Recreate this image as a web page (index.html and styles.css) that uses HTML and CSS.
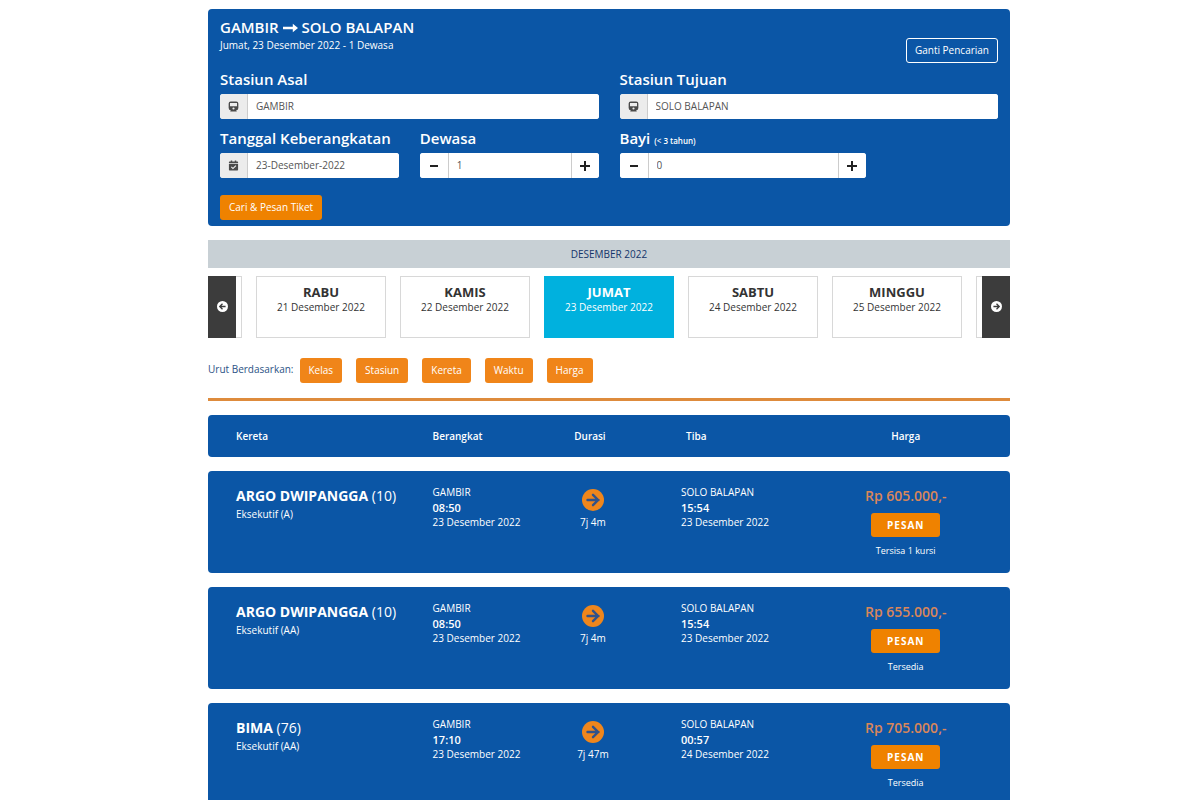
FILE: index.html
```html
<!DOCTYPE html>
<html lang="id">
<head>
<meta charset="utf-8">
<meta name="viewport" content="width=device-width, initial-scale=1">
<title>Jadwal Kereta</title>
<link rel="stylesheet" href="styles.css">
</head>
<body>
<svg class="sprite" aria-hidden="true">
  <symbol id="go" viewBox="0 0 22 22"><circle cx="11" cy="11" r="11" fill="#ef861c"/><path d="M5.500 11h11M11 5.800l5.200 5.200-5.200 5.200" fill="none" stroke="#31528a" stroke-width="2.400" stroke-linecap="round" stroke-linejoin="round"/></symbol>
  <symbol id="train" viewBox="0 0 12 12"><path fill-rule="evenodd" d="M3 .5h6a2.300 2.300 0 0 1 2.300 2.300v4.700a3 3 0 0 1-2.500 2.900l.9 1.100H2.300l.9-1.100A3 3 0 0 1 .7 7.500V2.800A2.300 2.300 0 0 1 3 .5zM2.200 2.300v3.500h7.600V2.300zM6 7a1.200 1.200 0 1 0 0 2.400A1.200 1.200 0 0 0 6 7z"/></symbol>
</svg>
<main class="page">
  <form class="search">
    <header class="search-head">
      <div>
        <h1 class="route">GAMBIR <svg class="route-arrow" viewBox="0 0 15 10" aria-hidden="true"><path d="M0 3.800h9.800V.8L15 5 9.800 9.200v-3H0z"/></svg> SOLO BALAPAN</h1>
        <p class="trip">Jumat, 23 Desember 2022 - 1 Dewasa</p>
      </div>
      <button type="button" class="btn btn-outline">Ganti Pencarian</button>
    </header>
    <div class="halves">
      <div class="field">
        <label for="asal">Stasiun Asal</label>
        <div class="group"><span class="addon"><svg viewBox="0 0 12 12" aria-hidden="true"><use href="#train"/></svg></span><input id="asal" type="text" value="GAMBIR"></div>
      </div>
      <div class="field">
        <label for="tujuan">Stasiun Tujuan</label>
        <div class="group"><span class="addon"><svg viewBox="0 0 12 12" aria-hidden="true"><use href="#train"/></svg></span><input id="tujuan" type="text" value="SOLO BALAPAN"></div>
      </div>
      <div class="halves">
        <div class="field">
          <label for="tanggal">Tanggal Keberangkatan</label>
          <div class="group"><span class="addon"><svg viewBox="0 0 12 12" aria-hidden="true"><path fill-rule="evenodd" d="M1 3.500V2.300Q1 1.500 1.800 1.500H3V.5h1.600v1h2.800v-1H9v1h1.200q.8 0 .8.800v1.200zM1 4.300h10v6.400q0 .8-.8.800H1.800q-.8 0-.8-.8zM3.200 7.900l2.200 2.300 3.700-3.700-.9-.9-2.800 2.800L4.100 7z"/></svg></span><input id="tanggal" type="text" value="23-Desember-2022"></div>
        </div>
        <div class="field">
          <label for="dewasa">Dewasa</label>
          <div class="group">
            <button type="button" class="step" aria-label="Kurangi dewasa"><svg viewBox="0 0 10 10"><path d="M1 4h8v2H1z"/></svg></button>
            <input id="dewasa" type="text" value="1">
            <button type="button" class="step" aria-label="Tambah dewasa"><svg viewBox="0 0 10 10"><path d="M4 0h2v4h4v2H6v4H4V6H0V4h4z"/></svg></button>
          </div>
        </div>
      </div>
      <div class="field infant">
        <label for="bayi">Bayi <small>(&lt; 3 tahun)</small></label>
        <div class="group">
          <button type="button" class="step" aria-label="Kurangi bayi"><svg viewBox="0 0 10 10"><path d="M1 4h8v2H1z"/></svg></button>
          <input id="bayi" type="text" value="0">
          <button type="button" class="step" aria-label="Tambah bayi"><svg viewBox="0 0 10 10"><path d="M4 0h2v4h4v2H6v4H4V6H0V4h4z"/></svg></button>
        </div>
      </div>
    </div>
    <button type="submit" class="btn btn-search">Cari &amp; Pesan Tiket</button>
  </form>

  <h2 class="month">DESEMBER 2022</h2>
  <nav class="dates">
    <ul class="days">
      <li class="day" aria-hidden="true"></li>
      <li class="day"><strong>RABU</strong><span>21 Desember 2022</span></li>
      <li class="day"><strong>KAMIS</strong><span>22 Desember 2022</span></li>
      <li class="day day-active"><strong>JUMAT</strong><span>23 Desember 2022</span></li>
      <li class="day"><strong>SABTU</strong><span>24 Desember 2022</span></li>
      <li class="day"><strong>MINGGU</strong><span>25 Desember 2022</span></li>
      <li class="day" aria-hidden="true"></li>
    </ul>
    <button type="button" class="slide slide-prev" aria-label="Sebelumnya"><svg viewBox="0 0 10 10"><circle cx="5" cy="5" r="5"/><path d="M7.800 5H2.800M5 2.500L2.500 5 5 7.500"/></svg></button>
    <button type="button" class="slide slide-next" aria-label="Berikutnya"><svg viewBox="0 0 10 10"><circle cx="5" cy="5" r="5"/><path d="M2.200 5h5M5 2.500L7.500 5 5 7.500"/></svg></button>
  </nav>

  <div class="sort">
    <span class="sort-label">Urut Berdasarkan:</span>
    <div class="sort-buttons">
      <button type="button" class="btn">Kelas</button>
      <button type="button" class="btn">Stasiun</button>
      <button type="button" class="btn">Kereta</button>
      <button type="button" class="btn">Waktu</button>
      <button type="button" class="btn">Harga</button>
    </div>
  </div>

  <table class="trains">
    <thead>
      <tr><th class="c-train">Kereta</th><th class="c-from">Berangkat</th><th class="c-time">Durasi</th><th class="c-to">Tiba</th><th class="c-price">Harga</th></tr>
    </thead>
    <tbody>
      <tr>
        <td class="c-train"><p class="name"><b>ARGO DWIPANGGA</b> (10)</p><p class="class">Eksekutif (A)</p></td>
        <td class="c-from"><p>GAMBIR</p><p class="hour">08:50</p><p>23 Desember 2022</p></td>
        <td class="c-time"><svg class="go" viewBox="0 0 22 22" aria-hidden="true"><use href="#go"/></svg><p>7j 4m</p></td>
        <td class="c-to"><p>SOLO BALAPAN</p><p class="hour">15:54</p><p>23 Desember 2022</p></td>
        <td class="c-price"><p class="price">Rp 605.000,-</p><button type="button" class="btn-book">PESAN</button><p class="seats">Tersisa 1 kursi</p></td>
      </tr>
      <tr>
        <td class="c-train"><p class="name"><b>ARGO DWIPANGGA</b> (10)</p><p class="class">Eksekutif (AA)</p></td>
        <td class="c-from"><p>GAMBIR</p><p class="hour">08:50</p><p>23 Desember 2022</p></td>
        <td class="c-time"><svg class="go" viewBox="0 0 22 22" aria-hidden="true"><use href="#go"/></svg><p>7j 4m</p></td>
        <td class="c-to"><p>SOLO BALAPAN</p><p class="hour">15:54</p><p>23 Desember 2022</p></td>
        <td class="c-price"><p class="price">Rp 655.000,-</p><button type="button" class="btn-book">PESAN</button><p class="seats">Tersedia</p></td>
      </tr>
      <tr>
        <td class="c-train"><p class="name"><b>BIMA</b> (76)</p><p class="class">Eksekutif (AA)</p></td>
        <td class="c-from"><p>GAMBIR</p><p class="hour">17:10</p><p>23 Desember 2022</p></td>
        <td class="c-time"><svg class="go" viewBox="0 0 22 22" aria-hidden="true"><use href="#go"/></svg><p>7j 47m</p></td>
        <td class="c-to"><p>SOLO BALAPAN</p><p class="hour">00:57</p><p>24 Desember 2022</p></td>
        <td class="c-price"><p class="price">Rp 705.000,-</p><button type="button" class="btn-book">PESAN</button><p class="seats">Tersedia</p></td>
      </tr>
    </tbody>
  </table>
</main>
</body>
</html>
```
FILE: styles.css
```css
* { box-sizing: border-box; }
body {
  margin: 0;
  padding: 9px 0 0 18px;
  background: #fff;
  color: #333;
  font-family: "Open Sans", sans-serif;
  font-size: 10px;
  line-height: 15px;
}
h1, h2, p, ul { margin: 0; padding: 0; }
button, input { font: inherit; }
.sprite { position: absolute; width: 0; height: 0; }
.page { max-width: 802px; margin: 0 auto; }

.btn {
  height: 25px;
  padding: 0 9px;
  border: 0;
  border-radius: 3px;
  background: #f08519;
  color: #fff;
}

.search {
  padding: 7px 12px 6px;
  border-radius: 4px;
  background: #0b56a6;
  color: #fff;
}
.search-head {
  display: flex;
  justify-content: space-between;
  align-items: flex-end;
  margin-bottom: 6px;
}
.search-head > div { padding-bottom: 10px; }
.route { font-size: 15px; line-height: 22px; font-weight: 600; }
.route-arrow { width: 15px; height: 10px; fill: #fff; }
.btn-outline {
  padding: 0 8px;
  border: 1px solid #fff;
  background: transparent;
}
.halves {
  display: grid;
  grid-template-columns: repeat(2, minmax(0, 1fr));
  column-gap: 21px;
  row-gap: 9px;
}
.field label {
  display: block;
  margin-bottom: 5px;
  font-size: 15px;
  line-height: 20px;
  font-weight: 600;
  white-space: nowrap;
}
.field small { font-size: 8px; line-height: 10px; }
.infant { width: 65%; }
.group {
  display: flex;
  height: 25px;
  border-radius: 3px;
  background: #fff;
  overflow: hidden;
}
.addon {
  display: grid;
  place-items: center;
  flex: 0 0 27px;
  background: #ececec;
}
.addon svg { width: 11px; height: 11px; fill: #4a4a4a; }
.group input {
  flex: 1;
  min-width: 0;
  padding: 0 8px;
  border: 0;
  border-left: 1px solid #ccc;
  background: #fff;
  color: #555;
}
.step {
  display: grid;
  place-items: center;
  flex: 0 0 28px;
  padding: 0;
  border: 0;
  background: #fff;
}
.step svg { width: 10px; height: 10px; fill: #222; }
.group input + .step { border-left: 1px solid #ccc; }
.btn-search { display: block; margin-top: 17px; background: #ef8200; }

.month {
  margin-top: 14px;
  background: #c8d0d5;
  color: #14356b;
  font-size: 10px;
  line-height: 28px;
  font-weight: 400;
  text-align: center;
}
.dates {
  position: relative;
  margin-top: 8px;
  overflow: hidden;
}
.days {
  display: flex;
  justify-content: center;
  gap: 14px;
  list-style: none;
}
.day {
  flex: 0 0 130px;
  height: 62px;
  padding-top: 7px;
  border: 1px solid #d8d8d8;
  text-align: center;
}
.day strong {
  display: block;
  color: #333;
  font-size: 13px;
  line-height: 16px;
}
.day-active, .day-active strong {
  border-color: #00b1de;
  background: #00b1de;
  color: #fff;
}
.slide {
  position: absolute;
  top: 0;
  bottom: 0;
  width: 28px;
  padding: 0;
  border: 0;
  background: #3c3c3c;
}
.slide-prev { left: 0; }
.slide-next { right: 0; }
.slide svg { width: 11px; height: 11px; margin-bottom: 2px; vertical-align: middle; }
.slide circle { fill: #fff; }
.slide path { fill: none; stroke: #3c3c3c; stroke-width: 1.2; }

.sort {
  display: flex;
  gap: 6px;
  margin-top: 20px;
  padding-bottom: 15px;
  border-bottom: 3px solid #de8b3c;
}
.sort-label { padding-top: 4px; color: #2c5285; }
.sort-buttons { display: flex; gap: 14px; }

.trains {
  width: 100%;
  table-layout: fixed;
  border-spacing: 0 14px;
  color: #fff;
}
.trains th, .trains td {
  padding: 0;
  background: #0b56a6;
  text-align: left;
  vertical-align: top;
}
.trains th { height: 42px; font-weight: 600; vertical-align: middle; }
.trains td { height: 102px; padding-top: 14px; }
.trains .c-train { width: 28%; padding-left: 28px; border-radius: 4px 0 0 4px; }
.trains .c-from { width: 15%; }
.trains .c-time { width: 10%; text-align: center; }
.trains .c-to { width: 21%; padding-left: 48px; }
.trains .c-price { width: 26%; text-align: center; border-radius: 0 4px 4px 0; }
.trains th.c-time { padding-right: 6px; }
.trains th.c-to { padding-left: 53px; }
.name { font-size: 14px; line-height: 22px; }
.hour { font-size: 11px; font-weight: 600; }
.go { display: block; width: 22px; height: 22px; margin: 4px auto; }
.price {
  color: #d9865a;
  font-size: 14px;
  line-height: 22px;
  font-weight: 600;
}
.btn-book {
  height: 24px;
  margin: 6px 0;
  padding: 0 16px;
  border: 0;
  border-radius: 3px;
  background: #ef8200;
  color: #fff;
  font-weight: 700;
  letter-spacing: 1px;
}
.seats { font-size: 9px; }
```
